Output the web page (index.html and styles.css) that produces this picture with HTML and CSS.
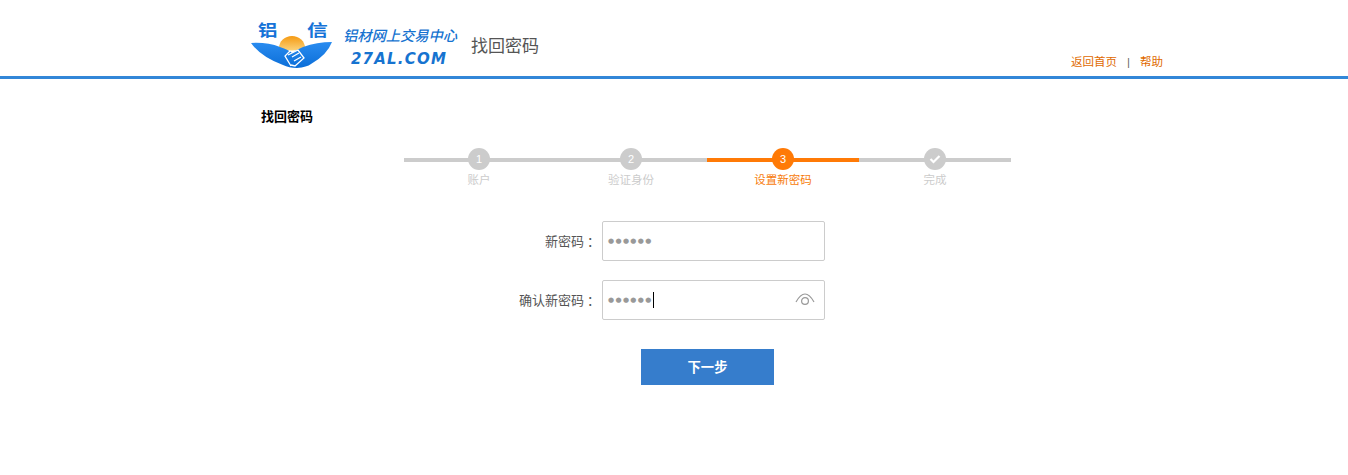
FILE: index.html
```html
<!DOCTYPE html>
<html lang="zh-CN">
<head>
<meta charset="utf-8">
<title>找回密码</title>
<link rel="stylesheet" href="styles.css">
</head>
<body>
<header class="site-header">
  <div class="header-inner">
    <a class="logo" href="#">
      <svg class="logo-mark" width="84" height="58" viewBox="0 -8 84 58">
        <defs>
          <linearGradient id="sun" x1="0" y1="0" x2="0" y2="1">
            <stop offset="0" stop-color="#f59a12"/>
            <stop offset="1" stop-color="#fbd27a"/>
          </linearGradient>
          <linearGradient id="wing" x1="0" y1="0" x2="0" y2="1">
            <stop offset="0" stop-color="#2a8cf0"/>
            <stop offset="1" stop-color="#0b6ed8"/>
          </linearGradient>
        </defs>
        <text class="logo-char" transform="translate(7 17) scale(1.22 1)">铝</text>
        <text class="logo-char" transform="translate(56 17) scale(1.3 1)">信</text>
        <path d="M28 29a13 12 0 0 1 26 0q-13 5-26 0z" fill="url(#sun)"/>
        <path d="M0 24Q16 23 29 28Q38 31 41 34Q45 31 52 28Q66 23 81 23Q76 36 60 45Q56 48 46 49Q38 49 32 46Q10 38 0 24z" fill="url(#wing)"/>
        <g fill="none" stroke="#fff" stroke-width="1.3">
          <path d="M39 32l-5 5 6 10"/>
          <path d="M37 36l10-5 6 8-9 8-4-1"/>
          <path d="M41 38l7-4M43 42l7-4"/>
        </g>
      </svg>
      <span class="logo-text">
        <span class="logo-slogan">铝材网上交易中心</span>
        <span class="logo-domain">27AL.COM</span>
      </span>
    </a>
    <h1 class="page-name">找回密码</h1>
    <nav class="header-links">
      <a href="#">返回首页</a>
      <span class="sep">|</span>
      <a href="#">帮助</a>
    </nav>
  </div>
</header>

<main class="main">
  <h2 class="section-title">找回密码</h2>

  <ol class="steps">
    <li class="step"><span class="dot">1</span><span class="step-label">账户</span></li>
    <li class="step"><span class="dot">2</span><span class="step-label">验证身份</span></li>
    <li class="step is-active"><span class="dot">3</span><span class="step-label">设置新密码</span></li>
    <li class="step">
      <span class="dot">
        <svg width="12" height="10" viewBox="0 0 12 10"><path d="M1.5 5l3 3 6-6" fill="none" stroke="#fff" stroke-width="2.2"/></svg>
      </span>
      <span class="step-label">完成</span>
    </li>
  </ol>

  <form class="form">
    <div class="row">
      <label class="row-label">新密码<span class="colon">：</span></label>
      <div class="field"><span class="mask">●●●●●●</span></div>
    </div>
    <div class="row">
      <label class="row-label">确认新密码<span class="colon">：</span></label>
      <div class="field">
        <span class="mask">●●●●●●</span><span class="caret"></span>
        <svg class="eye" width="20" height="12" viewBox="0 0 20 12">
          <path d="M1 9Q10 -7 19 9" fill="none" stroke="#999" stroke-width="1.2"/>
          <circle cx="10" cy="8" r="3.4" fill="none" stroke="#999" stroke-width="1.2"/>
        </svg>
      </div>
    </div>
    <button class="next" type="button">下一步</button>
  </form>
</main>
</body>
</html>
```

FILE: styles.css
```css
* { box-sizing: border-box; }
html, body { margin: 0; padding: 0; }
body {
  background: #fff;
  color: #555;
  font-family: "Liberation Sans", "Noto Sans CJK SC", sans-serif;
  font-size: 12px;
}
a { text-decoration: none; color: inherit; }

.site-header {
  height: 79px;
  border-bottom: 3px solid #3287d8;
}
.header-inner {
  width: 912px;
  height: 76px;
  margin-left: 251px;
  display: flex;
  align-items: flex-start;
}
.logo {
  display: flex;
  padding-top: 11px;
  width: 220px;
}
.logo-mark { flex: none; }
.logo-char {
  font-family: "Noto Sans CJK SC", sans-serif;
  font-size: 16px;
  font-weight: 700;
  fill: #1673d8;
}
.logo-text {
  display: flex;
  flex-direction: column;
  align-items: center;
  margin-left: 8px;
  padding-top: 8px;
  color: #1673d0;
  font-style: italic;
}
.logo-slogan {
  font-family: "Noto Sans CJK SC", sans-serif;
  font-size: 14.25px;
  font-weight: 500;
  line-height: 20px;
  margin-top: 6px;
  white-space: nowrap;
}
.logo-domain {
  font-family: "DejaVu Sans", sans-serif;
  font-size: 15px;
  font-weight: 700;
  line-height: 18px;
  margin-top: 5px;
  margin-left: -2px;
  letter-spacing: 1.2px;
}
.page-name {
  margin: 32px 0 0;
  font-size: 17px;
  line-height: 26px;
  font-weight: 400;
  color: #555;
  font-family: "Noto Sans CJK SC", sans-serif;
}
.header-links {
  margin-left: auto;
  margin-top: 53px;
  display: flex;
  gap: 9px;
  font-size: 11.5px;
  line-height: 18px;
  color: #e06a00;
}
.sep { color: #666; margin: 0 1px; }

.main { display: flex; flex-direction: column; }
.section-title {
  margin: 29px 0 0 261px;
  font-size: 13px;
  line-height: 18px;
  font-weight: 700;
  color: #000;
}
.steps {
  list-style: none;
  width: 608px;
  margin: 22px 0 0 403px;
  padding: 0;
  display: grid;
  grid-template-columns: repeat(4, 1fr);
}
.step {
  position: relative;
  display: flex;
  flex-direction: column;
  align-items: center;
  color: #ccc;
}
.step::before {
  content: "";
  position: absolute;
  left: 0;
  right: 0;
  top: 10px;
  height: 4px;
  background: #ccc;
}
.step:first-child::before { left: 1px; }
.dot {
  position: relative;
  width: 22px;
  height: 22px;
  border-radius: 50%;
  background: #ccc;
  color: #fff;
  font-size: 11px;
  line-height: 22px;
  text-align: center;
  display: flex;
  align-items: center;
  justify-content: center;
}
.step-label { margin-top: 1px; font-size: 11.5px; line-height: 18px; }
.is-active { color: #f77b0a; }
.is-active::before, .is-active .dot { background: #ff7a06; }

.form {
  display: flex;
  flex-direction: column;
  margin: 32px 0 0;
}
.row {
  display: flex;
  align-items: center;
  height: 40px;
  margin-bottom: 19px;
}
.row-label {
  width: 597px;
  padding-bottom: 2px;
  text-align: right;
  font-size: 13px;
  color: #555;
}
.colon {
  font-family: "Noto Sans CJK TC", sans-serif;
  margin-left: 3px;
  margin-right: -3px;
}
.field {
  position: relative;
  width: 223px;
  height: 40px;
  margin-left: 5px;
  padding-left: 5px;
  border: 1px solid #ccc;
  border-radius: 2px;
  display: flex;
  align-items: center;
}
.mask {
  color: #999;
  font-family: "DejaVu Sans", sans-serif;
  font-size: 7px;
  letter-spacing: 1.35px;
  line-height: 16px;
}
.caret {
  width: 1px;
  height: 16px;
  background: #000;
}
.eye {
  position: absolute;
  right: 9px;
  top: 12px;
}
.next {
  width: 133px;
  height: 36px;
  margin: 10px 0 0 641px;
  padding: 0 0 2px;
  border: 0;
  background: #367dcc;
  color: #fff;
  font-family: "Liberation Sans", "Noto Sans CJK SC", sans-serif;
  font-size: 13.3px;
  font-weight: 700;
}
```
